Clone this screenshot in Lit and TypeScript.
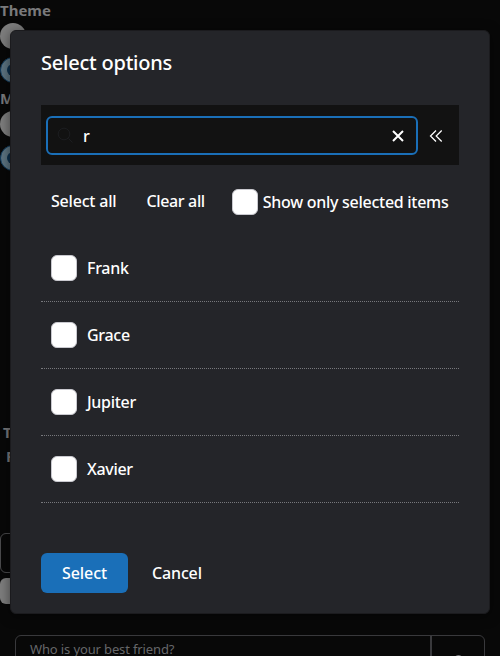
import { LitElement, html, css } from "lit";
import { customElement, property, state } from "lit/decorators.js";

@customElement("check-box")
class CheckBox extends LitElement {
  static styles = css`
    :host { display: block; width: 26px; height: 26px; flex: none; box-sizing: border-box;
      background: #fff; border: 1px solid #c9c9cf; border-radius: 6px; }
  `;
  render() { return html``; }
}

@customElement("option-row")
class OptionRow extends LitElement {
  @property() label = "";
  static styles = css`
    :host { display: flex; align-items: center; gap: 10px; height: 67px; box-sizing: border-box;
      padding-left: 10px; border-bottom: 1px dotted #77787c; }
    .label { font-size: 16px; font-weight: 500; line-height: 24px; letter-spacing: -0.3px; }
  `;
  render() { return html`<check-box></check-box><span class="label">${this.label}</span>`; }
}

@customElement("app-root")
class AppRoot extends LitElement {
  @state() query = "r";
  @state() options = ["Frank", "Grace", "Jupiter", "Xavier"];

  static styles = css`
    :host { display: block; position: relative; width: 500px; height: 656px; overflow: hidden;
      background: #080808; color: #fff; font-family: "Noto Sans", sans-serif; }
    .page { height: 656px; overflow: hidden; color: #79797b; display: flex; flex-direction: column; }
    .heading { font-size: 15px; font-weight: 700; line-height: 20px; height: 22px; flex: none; }
    .radio { width: 26px; height: 26px; border-radius: 50%; background: #7d7d7d; flex: none; box-sizing: border-box; }
    .radio.first { margin-top: 1px; }
    .radio.on { margin: 8px 0 5px; background: #5c7380; border: 1px solid #113d60; display: grid; place-items: center; }
    .radio.on::after { content: ""; width: 12px; height: 12px; border-radius: 50%; background: #0c304d; }
    .side { padding-left: 3px; margin-top: 244px; height: 48px; font-size: 15px; font-weight: 700; line-height: 24px; flex: none; }
    .side div + div { padding-left: 3px; }
    .box { height: 40px; width: 120px; margin-top: 65px; border: 1px solid #4a4a4c; border-radius: 6px; box-sizing: border-box; flex: none; }
    .tick { width: 26px; height: 26px; margin-top: 5px; border-radius: 6px; background: #7d7d7d; flex: none; }
    .field { margin: 31px 15px 0; height: 50px; box-sizing: border-box; flex: none; border: 1px solid #39393c; border-radius: 6px;
      display: flex; font-size: 13px; line-height: 26px; color: #66676a; }
    .field .text { flex: 1; padding: 0 14px; letter-spacing: -0.13px; }
    .field .end { width: 54px; border-left: 2px solid #39393c; display: flex; justify-content: center; padding-top: 19px; box-sizing: border-box; }
    .knob { width: 9px; height: 9px; border-radius: 50%; background: #77777a; }

    .dialog { position: absolute; left: 10px; top: 30px; width: 480px; height: 584px; box-sizing: border-box;
      background: #242529; border: 1px solid #1b1b1e; border-radius: 6px; box-shadow: 0 2px 12px rgba(0,0,0,.5);
      padding: 0 30px; font-size: 16px; font-weight: 500; }
    .title { margin: 0; height: 74px; line-height: 64px; font-size: 20px; font-weight: 500; letter-spacing: -0.22px; }
    .search { height: 60px; box-sizing: border-box; padding: 10px 5px 9px; background: #121212; display: flex; }
    .input { width: 372px; height: 39px; margin-top: 1px; box-sizing: border-box; border: 2px solid #1a6fb8; border-radius: 6px;
      display: flex; align-items: center; padding: 0 11px 0 9px; }
    .query { margin: 0 0 0 9px; flex: 1; }
    .collapse { flex: 1; display: grid; place-items: center; }
    svg { display: block; fill: none; }
    .tools { height: 70px; display: flex; align-items: center; padding: 2px 10px 0; box-sizing: border-box; }
    .tools .all, .tools .clear { letter-spacing: -0.2px; white-space: nowrap; }
    .tools .clear { margin-left: 30px; letter-spacing: -0.35px; }
    .tools check-box { margin-left: 27px; margin-top: 1px; }
    .tools .only { margin-left: 5px; margin-top: 2px; letter-spacing: -0.28px; white-space: nowrap; }
    .actions { display: flex; align-items: center; margin-top: 50px; letter-spacing: -0.15px; }
    .primary { width: 87px; height: 40px; border-radius: 6px; background: #1a6fb8; display: grid; place-items: center; margin-right: 24px; letter-spacing: -0.1px; }
  `;

  render() {
    return html`
      <div class="page">
        <div class="heading">Theme</div>
        <div class="radio first"></div><div class="radio on"></div>
        <div class="heading">Mode</div>
        <div class="radio first"></div><div class="radio on"></div>
        <div class="side"><div>T</div><div>F</div></div>
        <div class="box"></div><div class="tick"></div>
        <div class="field"><span class="text">Who is your best friend?</span><span class="end"><i class="knob"></i></span></div>
      </div>
      <div class="dialog">
        <h1 class="title">Select options</h1>
        <div class="search">
          <div class="input">
            <svg width="17" height="17" viewBox="0 0 17 17" stroke="#1c1d20"><circle cx="7" cy="7" r="5.8"/><path d="M11.5 11.5 15.5 15.5"/></svg>
            <span class="query">${this.query}</span>
            <svg width="14" height="14" viewBox="0 0 14 14" stroke="#fff" stroke-width="2"><path d="M2 2 12 12M12 2 2 12"/></svg>
          </div>
          <div class="collapse"><svg width="14" height="14" viewBox="0 0 14 14" stroke="#fff" stroke-width="1.25"><path d="M7 1.5 1.5 7 7 12.5M12.7 1.5 7.2 7 12.7 12.5"/></svg></div>
        </div>
        <div class="tools"><span class="all">Select all</span><span class="clear">Clear all</span><check-box></check-box><span class="only">Show only selected items</span></div>
        ${this.options.map((o) => html`<option-row .label=${o}></option-row>`)}
        <div class="actions"><span class="primary">Select</span><span>Cancel</span></div>
      </div>`;
  }
}
